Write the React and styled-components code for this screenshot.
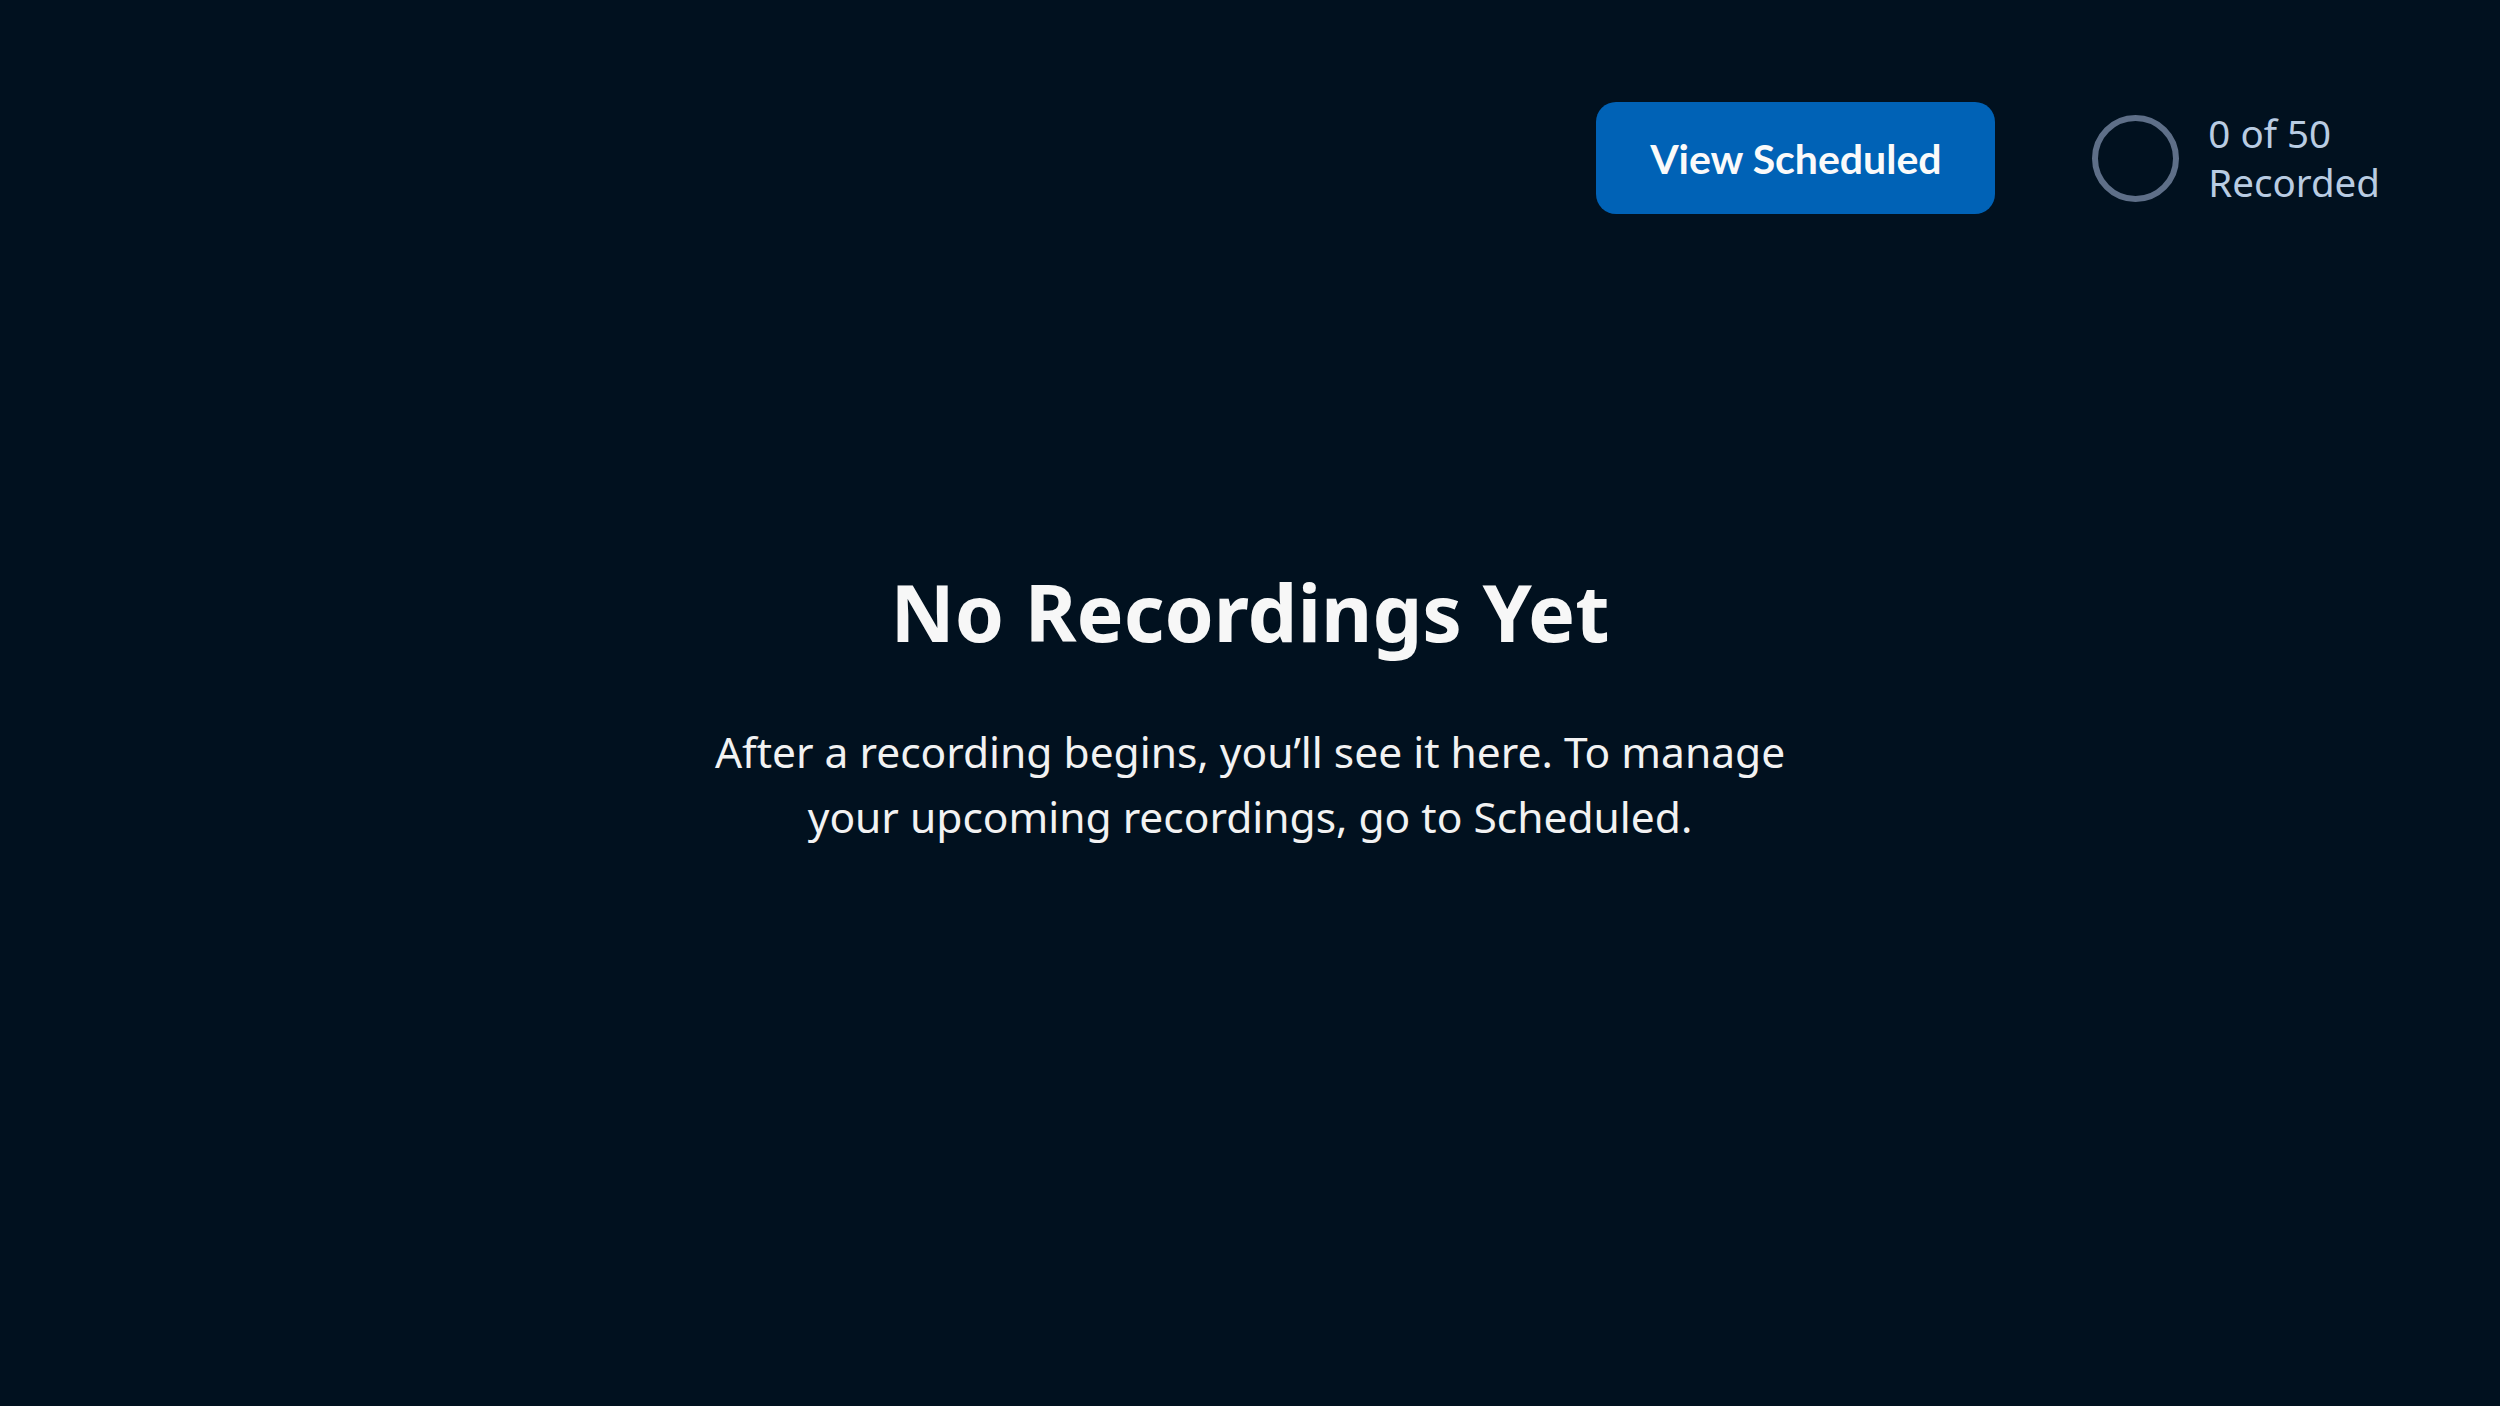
import React from 'react';
import styled, { createGlobalStyle } from 'styled-components';

////////////////////////////////////////////////////////////////////////////////////////////////////
// Global

const GlobalStyle = createGlobalStyle`
  html, body {
    margin: 0;
    padding: 0;
    background: #01111f;
  }
  body {
    font-family: "Noto Sans", Lato, sans-serif;
  }
`;

const Page = styled.div`
  display: flex;
  flex-direction: column;
  min-height: 100vh;
  box-sizing: border-box;
  padding: 102px 120px 0 0;
  background: #01111f;
`;

////////////////////////////////////////////////////////////////////////////////////////////////////
// Header

const Header = styled.header`
  display: flex;
  align-items: center;
  justify-content: flex-end;
  gap: 97px;
`;

const PrimaryButton = styled.button`
  width: 399px;
  height: 112px;
  border: none;
  border-radius: 20px;
  background: #0062b6;
  color: #fafafa;
  font-family: Lato, "Noto Sans", sans-serif;
  font-size: 41px;
  font-weight: 700;
  cursor: pointer;
`;

const Counter = styled.div`
  display: flex;
  align-items: center;
  gap: 29px;
`;

const Ring = styled.div`
  width: 87px;
  height: 87px;
  box-sizing: border-box;
  border: 6px solid #5e6f88;
  border-radius: 50%;
`;

const CounterText = styled.div`
  color: #b9cce2;
  font-size: 38.5px;
  line-height: 49px;
`;

////////////////////////////////////////////////////////////////////////////////////////////////////
// Empty state

const Empty = styled.main`
  display: flex;
  flex-direction: column;
  align-items: center;
  padding: 350px 0 0 120px;
  text-align: center;
`;

const Title = styled.h1`
  margin: 0;
  color: #f7f7f7;
  font-size: 79px;
  font-weight: 700;
  line-height: 96px;
`;

const Message = styled.p`
  margin: 59px 0 0;
  width: 1130px;
  color: #f2f2f2;
  font-size: 42.5px;
  line-height: 65px;
`;

export default function App() {
  return (
    <React.Fragment>
      <GlobalStyle />
      <Page>
        <Header>
          <PrimaryButton>View Scheduled</PrimaryButton>
          <Counter>
            <Ring />
            <CounterText>
              0 of 50
              <br />
              Recorded
            </CounterText>
          </Counter>
        </Header>
        <Empty>
          <Title>No Recordings Yet</Title>
          <Message>
            After a recording begins, you’ll see it here. To manage your upcoming recordings, go to
            Scheduled.
          </Message>
        </Empty>
      </Page>
    </React.Fragment>
  );
}
